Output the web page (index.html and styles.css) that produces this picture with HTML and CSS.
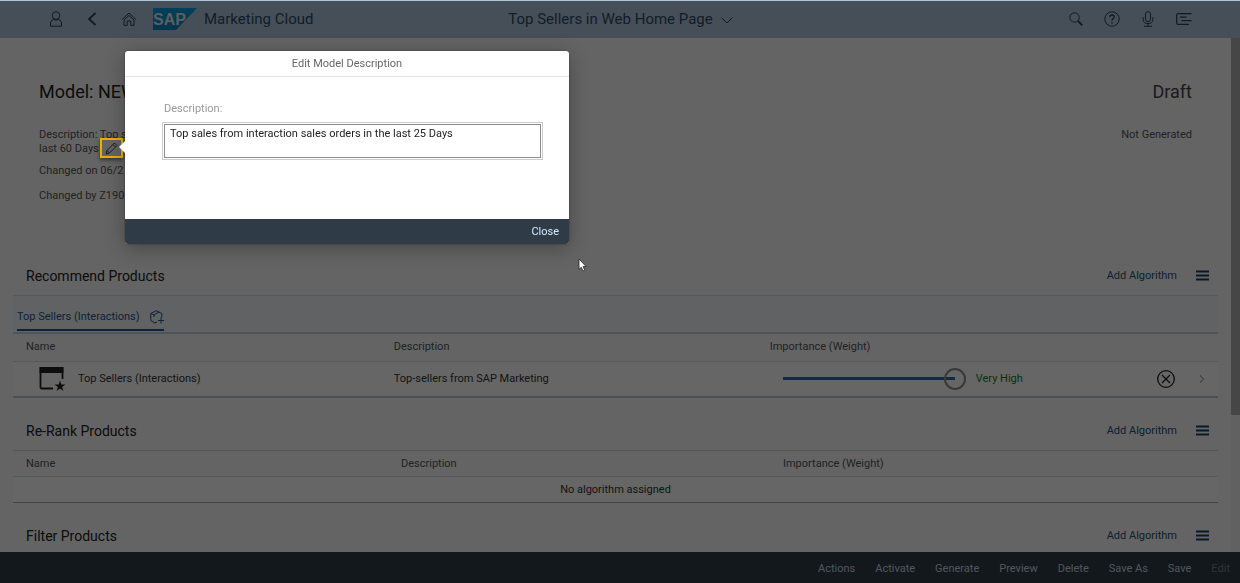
FILE: index.html
```html
<!DOCTYPE html>
<html lang="en">
<head>
<meta charset="utf-8">
<title>Top Sellers in Web Home Page</title>
<link rel="stylesheet" href="styles.css">
</head>
<body>
<div class="app">
  <header class="shell">
    <div class="shell-left">
      <div class="nav">
        <button class="icon-btn" aria-label="User"><svg width="14" height="16" viewBox="0 0 14 16"><circle cx="7" cy="4.500" r="3.800"/><path d="M1.500 15.200V12q0-3 3-3.500 2.500 1.200 5 0 3 .5 3 3.500v3.200z"/></svg></button>
        <button class="icon-btn" aria-label="Back"><svg width="10" height="14" viewBox="0 0 10 14"><path d="M8.500 1L2 7l6.500 6" stroke-width="1.800"/></svg></button>
        <button class="icon-btn" aria-label="Home"><svg width="16" height="14" viewBox="0 0 16 14"><path d="M1 7.500L8 1l7 6.500M3 8v5.300h3.200V9h3.600v4.300H13V8L8 3.500z"/></svg></button>
      </div>
      <div class="brand">
        <svg class="logo" width="44" height="22" viewBox="0 0 44 22" role="img" aria-label="SAP"><defs><linearGradient id="sap" x1="0" y1="0" x2="0" y2="1"><stop offset="0" stop-color="#009fdf"/><stop offset="1" stop-color="#0083c0"/></linearGradient></defs><path d="M0 0h44L23 22H0z" fill="url(#sap)"/><text x="0" y="17" class="logo-text">SAP</text></svg>
        <span>Marketing Cloud</span>
      </div>
    </div>
    <button class="shell-title">Top Sellers in Web Home Page <svg width="12" height="11" viewBox="0 0 12 11"><path d="M.5 4.500L6 10l5.500-5.500"/></svg></button>
    <div class="shell-right">
      <button class="icon-btn" aria-label="Search"><svg width="14" height="14" viewBox="0 0 14 14"><circle cx="5.500" cy="5.500" r="4.700"/><path d="M9 9l4.300 4.300" stroke-width="1.800"/></svg></button>
      <button class="icon-btn" aria-label="Help"><svg width="16" height="16" viewBox="0 0 16 16"><circle cx="8" cy="8" r="7.200"/><path d="M5.800 6q.1-2 2.200-2t2.200 1.800Q10.200 7 9 7.800T8 9.800M8 11v1.500" stroke-width="1.300"/></svg></button>
      <button class="icon-btn" aria-label="Voice"><svg width="12" height="16" viewBox="0 0 12 16"><rect x="3.500" y=".6" width="5" height="10" rx="2.500"/><path d="M1 6.500H.5M11 6.500h.5M1.200 6.500V9q.3 3.500 4.800 3.500T10.800 9V6.500M6 12.500v2.800M2 15.300h8"/></svg></button>
      <button class="icon-btn" aria-label="Notifications"><svg width="16" height="12" viewBox="0 0 16 12"><path d="M15.500 .7H2Q.7 .7 .7 2v8q0 1.300 1.300 1.300h11M4 4.200h6.500M5.500 7.700h10" stroke-width="1.200"/></svg></button>
    </div>
  </header>

  <div class="viewport">
    <main class="content">
      <section class="object">
        <div class="object-info">
          <h1>Model: NEW</h1>
          <p class="desc">Description: Top sales from interaction sales orders in the last 60 Days</p>
          <p>Changed on 06/2</p>
          <p class="changed-by">Changed by Z190</p>
        </div>
        <div class="object-status">
          <div class="state">Draft</div>
          <div>Not Generated</div>
        </div>
      </section>

      <section class="block">
        <div class="toolbar">
          <h2>Recommend Products</h2>
          <button class="link">Add Algorithm</button>
          <button class="menu" aria-label="Menu"><svg width="13" height="11" viewBox="0 0 13 11"><path d="M0 1.500h13M0 5.500h13M0 9.500h13"/></svg></button>
        </div>
        <div class="tabs">
          <button class="tab">Top Sellers (Interactions) <svg width="14" height="14" viewBox="0 0 14 14"><path d="M6.500 12.500L4.500 12.800 .8 10.500V3.500L6.300 .7l5.500 2.800v4M.8 3.500L4 5l5-3M4 5v2M11 7.500v6M8 10.500h6M4.500 12.800l2-.8"/></svg></button>
        </div>
        <table class="grid primary">
          <thead><tr><th class="c1">Name</th><th class="c2">Description</th><th>Importance (Weight)</th><th class="act"></th></tr></thead>
          <tbody><tr>
            <td><div class="name"><svg width="27" height="26" viewBox="0 0 27 26"><path d="M14 22.500H3q-1.500 0-1.500-1.500V2h22v11" fill="none" stroke="#222" stroke-width="1.800"/><path d="M.6 1h23.800v6H.6z" fill="#222"/><path d="M21 14.500l1.300 3.900h4.200l-3.400 2.500 1.300 4.100-3.400-2.500-3.400 2.500 1.300-4.100-3.400-2.500h4.200z" fill="#222"/></svg>Top Sellers (Interactions)</div></td>
            <td>Top-sellers from SAP Marketing</td>
            <td><div class="weight"><input type="range" min="0" max="5" value="5" aria-label="Importance"><span>Very High</span></div></td>
            <td class="act"><div class="actions"><button aria-label="Remove"><svg width="18" height="18" viewBox="0 0 18 18" stroke="#222"><circle cx="9" cy="9" r="8.300" stroke-width="1.300"/><path d="M5 5l8 8M13 5l-8 8" stroke-width="1.300"/></svg></button><button aria-label="Details"><svg width="6" height="8" viewBox="0 0 6 8" stroke="#777"><path d="M1 .5L4.700 4 1 7.500"/></svg></button></div></td>
          </tr></tbody>
        </table>
      </section>

      <section class="block">
        <div class="toolbar">
          <h2>Re-Rank Products</h2>
          <button class="link">Add Algorithm</button>
          <button class="menu" aria-label="Menu"><svg width="13" height="11" viewBox="0 0 13 11"><path d="M0 1.500h13M0 5.500h13M0 9.500h13"/></svg></button>
        </div>
        <table class="grid secondary">
          <thead><tr><th class="c1">Name</th><th class="c2">Description</th><th>Importance (Weight)</th></tr></thead>
          <tbody><tr><td colspan="3" class="empty">No algorithm assigned</td></tr></tbody>
        </table>
      </section>

      <section class="block">
        <div class="toolbar">
          <h2>Filter Products</h2>
          <button class="link">Add Algorithm</button>
          <button class="menu" aria-label="Menu"><svg width="13" height="11" viewBox="0 0 13 11"><path d="M0 1.500h13M0 5.500h13M0 9.500h13"/></svg></button>
        </div>
      </section>
    </main>
    <div class="scrollbar"><div class="thumb"></div></div>
  </div>

  <footer class="footer">
    <button>Actions</button><button>Activate</button><button>Generate</button><button>Preview</button><button>Delete</button><button>Save As</button><button>Save</button><button disabled>Edit</button>
  </footer>
</div>

<div class="overlay"></div>
<button class="edit" aria-label="Edit description"><svg width="13" height="13" viewBox="0 0 13 13"><path d="M1 12l1-3.500L9.500 1l2.500 2.500L4.500 11zM8 2.500L10.500 5M2 8.500L4.500 11"/></svg></button>
<div class="dialog" role="dialog" aria-labelledby="dialog-title">
  <div class="dialog-head" id="dialog-title">Edit Model Description</div>
  <div class="dialog-body">
    <label for="description">Description:</label>
    <textarea id="description" spellcheck="false">Top sales from interaction sales orders in the last 25 Days</textarea>
  </div>
  <div class="dialog-foot"><button>Close</button></div>
</div>
<svg class="cursor" width="9" height="14" viewBox="0 0 9 14"><path d="M1 1v10.500l2.300-2.200 1.700 3.700 1.700-.8L5.200 8.600h3z" fill="#fff" stroke="#222" stroke-width=".8"/></svg>
</body>
</html>
```
FILE: styles.css
```css
* { box-sizing: border-box; }

body {
  margin: 0;
  background: #fafafa;
  color: #333;
  font: 11px/14px Roboto, "Liberation Sans", sans-serif;
}

button {
  padding: 0;
  border: 0;
  background: none;
  color: inherit;
  font: inherit;
}

svg { flex: none; fill: none; }
h1, h2, p { margin: 0; font-weight: 400; }

.app { display: flex; flex-direction: column; height: 100vh; }

/* Shell header */
.shell {
  display: grid;
  grid-template-columns: 1fr auto 1fr;
  flex: none;
  height: 38px;
  padding: 0 48px 0 49px;
  background: #afc6da;
  color: #2c4a66;
  font-size: 15px;
  line-height: 36px;
}
.shell-left, .shell-right, .shell-title, .nav, .brand { display: flex; align-items: center; height: 37px; }
.shell-left { gap: 16px; }
.nav { gap: 22px; }
.brand { gap: 7px; }
.shell-right { justify-content: flex-end; gap: 21px; }
.icon-btn { display: grid; place-items: center; min-width: 14px; height: 36px; }
.shell svg { stroke: #23425f; stroke-width: 1; }
.shell .logo { stroke: none; }
.logo-text { fill: #e6eaee; font: 700 16px "Liberation Sans", sans-serif; }
.shell-title { gap: 8px; }

/* Scrollable page */
.viewport { display: flex; flex: 1; min-height: 0; }
.content { flex: 1; overflow: hidden; padding: 0 13px; }
.scrollbar { flex: none; width: 9px; background: #f3f3f3; }
.thumb { height: 73.4%; background: #b0b0b0; }

.object {
  display: flex;
  justify-content: space-between;
  height: 217px;
  padding: 43px 26px 0;
  color: #555;
}
.object h1, .state { font-size: 18px; line-height: 22px; }
.object h1 { color: #222; }
.object p { margin-top: 7px; line-height: 15px; }
.object .desc { width: 290px; margin-top: 25px; line-height: 14px; }
.object .changed-by { margin-top: 10px; }
.object-status { text-align: right; }
.state { margin-bottom: 25px; color: #444; }

.block { margin-bottom: 12px; }
.toolbar { display: flex; align-items: center; height: 40px; padding: 1px 9px 0 13px; }
.toolbar h2 { flex: 1; color: #222; font-size: 14px; }
.link { color: #24507a; }
.menu { display: grid; margin-left: 19px; }
.menu svg { stroke: #14406b; stroke-width: 2; }

.tabs {
  display: flex;
  height: 37px;
  padding: 0 4px;
  border-top: 1px solid #dedede;
  background: #f2f5f8;
}
.tab { display: flex; align-items: center; gap: 10px; height: 35px; padding-top: 8px; border-bottom: 2px solid #245884; color: #24588a; }
.tab svg { stroke: #24588a; }

.grid { width: 100%; border-collapse: collapse; table-layout: fixed; }
.grid th, .grid td { padding: 0; font-weight: 400; text-align: left; }
.grid th { color: #555; }
.grid th:first-child { padding-left: 13px; }
.grid thead tr { border-bottom: 1px solid #dedede; }
.grid tbody { background: #fff; }
.primary thead tr { height: 28px; border-top: 2px solid #c5d3df; }
.primary tbody tr { height: 36px; border-bottom: 2px solid #b7c8d8; }
.primary .c1 { width: 31.6%; }
.primary .c2 { width: 31.2%; }
.primary .act { width: 80px; }
.secondary thead tr { height: 26px; border-top: 1px solid #d5d5d5; }
.secondary tbody tr { height: 26px; border-bottom: 1px solid #aaa; }
.secondary .c1 { width: 32.2%; }
.secondary .c2 { width: 31.7%; }
.grid .empty { text-align: center; }
.name { display: flex; align-items: center; gap: 12px; padding-left: 26px; }
.weight { display: flex; align-items: center; gap: 10px; padding-left: 13px; color: #1e7a1e; }
.weight input {
  appearance: none;
  width: 183px;
  height: 22px;
  margin: 0;
  background: linear-gradient(#2a6da8, #2a6da8) 0 50% / calc(100% - 11px) 3px no-repeat;
}
.weight input::-webkit-slider-thumb {
  appearance: none;
  width: 22px;
  height: 22px;
  border: 2px solid #8c8c8c;
  border-radius: 50%;
  background: transparent;
}
.actions { display: flex; align-items: center; justify-content: flex-end; gap: 24px; padding-right: 13px; }
.actions button { display: grid; }

.footer {
  display: flex;
  flex: none;
  align-items: center;
  justify-content: flex-end;
  gap: 20px;
  height: 31px;
  padding: 2px 10px 0;
  background: #2f3c48;
  color: #c9d6e2;
}
.footer button:disabled { color: #75808b; }

/* Modal layer */
.overlay { position: fixed; inset: 1px 0 0; background: rgba(0, 0, 0, .6); }
.edit {
  position: absolute;
  top: 138px;
  left: 100px;
  display: grid;
  place-items: center;
  width: 23px;
  height: 20px;
  border: 2px solid #f0ab00;
  box-shadow: 0 2px 4px rgba(0, 0, 0, .5);
}
.edit svg { stroke: #1c1c1c; }
.dialog {
  position: absolute;
  top: 51px;
  left: 125px;
  width: 444px;
  border-radius: 3px;
  background: #fff;
  box-shadow: 0 4px 20px rgba(0, 0, 0, .3), 0 0 2px rgba(0, 0, 0, .4);
}
.dialog::before {
  position: absolute;
  top: 90px;
  left: -6px;
  border: 6px solid transparent;
  border-right-color: #fff;
  border-left: 0;
  content: "";
}
.dialog-head { height: 26px; border-bottom: 1px solid #e5e5e5; color: #666; line-height: 26px; text-align: center; }
.dialog-body { display: grid; gap: 8px; height: 142px; padding: 25px 28px 0 39px; align-content: start; }
.dialog-body label { color: #999; }
.dialog-body textarea {
  width: 377px;
  height: 34px;
  padding: 2px 5px;
  border: 1px solid #8c8c8c;
  outline: 1px solid #ccc;
  outline-offset: 1px;
  color: #222;
  font: inherit;
  resize: none;
  overflow: hidden;
}
.dialog-foot {
  display: flex;
  align-items: center;
  justify-content: flex-end;
  height: 25px;
  padding: 0 10px;
  border-radius: 0 0 3px 3px;
  background: #2f3c48;
  color: #d5e8fa;
}
.cursor { position: absolute; top: 258px; left: 578px; }
```
